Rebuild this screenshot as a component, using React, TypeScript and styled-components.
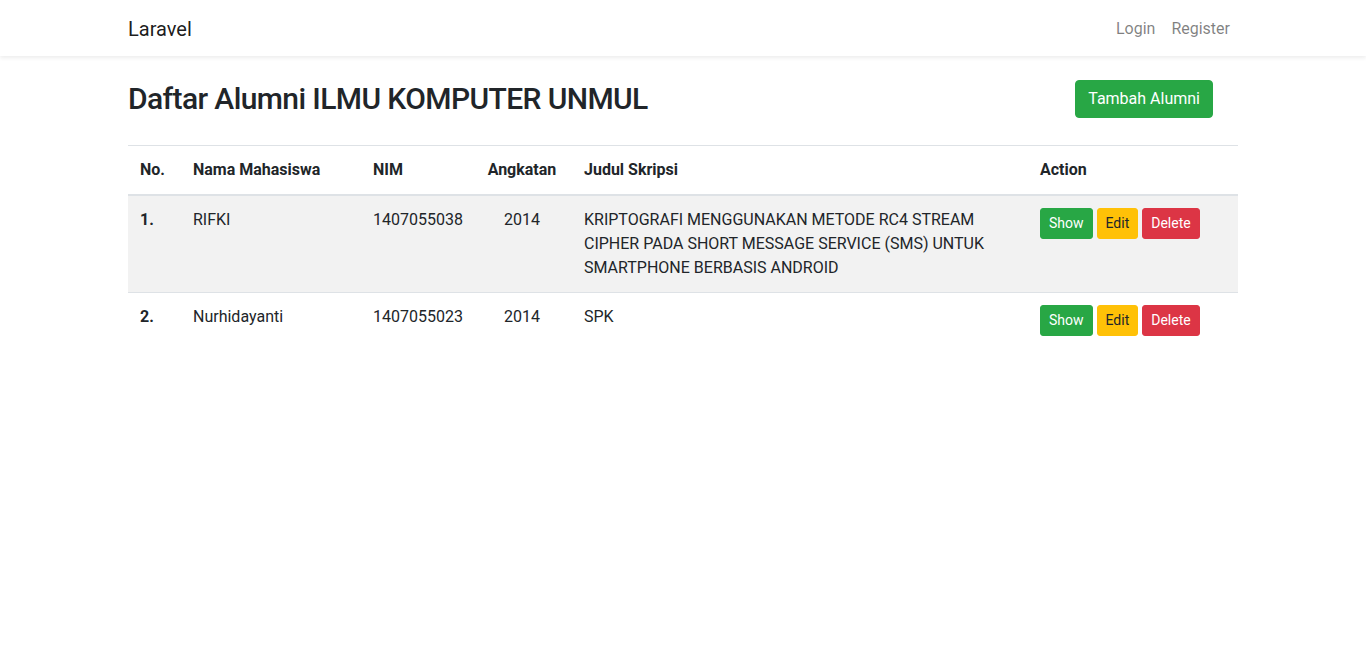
import React from "react";
import styled, { createGlobalStyle } from "styled-components";

const Global = createGlobalStyle`
  * { box-sizing: border-box; }
  body {
    margin: 0;
    font-family: Roboto, "Liberation Sans", sans-serif;
    font-size: 16px;
    line-height: 1.5;
    color: #212529;
    background: #fff;
  }
`;

const Navbar = styled.nav`
  background: #fff;
  box-shadow: 0 2px 4px rgba(0, 0, 0, 0.075);
  padding: 9px 0 7px;
`;

const Container = styled.div`
  width: 1140px;
  margin: 0 auto;
  padding: 0 15px;
`;

const NavInner = styled(Container)`
  display: flex;
  align-items: center;
  justify-content: space-between;
`;

const Brand = styled.a`
  font-size: 20px;
  line-height: 30px;
  padding: 5px 0;
  color: rgba(0, 0, 0, 0.9);
  text-decoration: none;
`;

const NavLinks = styled.div`
  display: flex;
`;

const NavLink = styled.a`
  padding: 8px;
  color: rgba(0, 0, 0, 0.5);
  text-decoration: none;
`;

const Main = styled.main`
  padding-top: 24px;
`;

const HeaderRow = styled.div`
  display: flex;
  align-items: center;
  justify-content: space-between;
  margin-bottom: 27px;
`;

const Title = styled.h2`
  margin: 0;
  font-size: 30px;
  letter-spacing: -0.6px;
  font-weight: 500;
  line-height: 38px;
`;

type Variant = "success" | "warning" | "danger";

const bg: Record<Variant, string> = {
  success: "#28a745",
  warning: "#ffc107",
  danger: "#dc3545",
};

const Button = styled.a<{ $variant: Variant; $small?: boolean }>`
  display: inline-block;
  text-decoration: none;
  border-radius: ${(p) => (p.$small ? "3px" : "4px")};
  border: 1px solid ${(p) => bg[p.$variant]};
  font-size: ${(p) => (p.$small ? "14px" : "16px")};
  line-height: ${(p) => (p.$small ? "21px" : "24px")};
  padding: ${(p) => (p.$small ? "4px 8px" : "6px 12px")};
  background: ${(p) => bg[p.$variant]};
  color: ${(p) => (p.$variant === "warning" ? "#212529" : "#fff")};
`;

const AddButton = styled(Button)`
  margin-right: 25px;
`;

const Table = styled.table`
  width: 100%;
  border-collapse: collapse;
  table-layout: fixed;
`;

const Col = styled.col<{ $w: number }>`
  width: ${(p) => p.$w}px;
`;

const Th = styled.th<{ $center?: boolean }>`
  text-align: ${(p) => (p.$center ? "center" : "left")};
  padding: 12px;
  border-top: 1px solid #dee2e6;
  border-bottom: 2px solid #dee2e6;
  vertical-align: bottom;
  font-weight: 700;
`;

const Tr = styled.tr<{ $striped?: boolean }>`
  background: ${(p) => (p.$striped ? "rgba(0,0,0,0.05)" : "transparent")};
`;

const Td = styled.td<{ $center?: boolean; $bold?: boolean }>`
  padding: 12px;
  border-top: 1px solid #dee2e6;
  vertical-align: top;
  text-align: ${(p) => (p.$center ? "center" : "left")};
  font-weight: ${(p) => (p.$bold ? 700 : 400)};
`;

const Actions = styled.div`
  display: flex;
  gap: 4px;
`;

const rows = [
  {
    no: "1.",
    nama: "RIFKI",
    nim: "1407055038",
    angkatan: "2014",
    judul:
      "KRIPTOGRAFI MENGGUNAKAN METODE RC4 STREAM CIPHER PADA SHORT MESSAGE SERVICE (SMS) UNTUK SMARTPHONE BERBASIS ANDROID",
  },
  { no: "2.", nama: "Nurhidayanti", nim: "1407055023", angkatan: "2014", judul: "SPK" },
];

export default function App() {
  return (
    <>
      <Global />
      <Navbar>
        <NavInner>
          <Brand href="#">Laravel</Brand>
          <NavLinks>
            <NavLink href="#">Login</NavLink>
            <NavLink href="#">Register</NavLink>
          </NavLinks>
        </NavInner>
      </Navbar>
      <Main>
        <Container>
          <HeaderRow>
            <Title>Daftar Alumni ILMU KOMPUTER UNMUL</Title>
            <AddButton href="#" $variant="success">
              Tambah Alumni
            </AddButton>
          </HeaderRow>
          <Table>
            <colgroup>
              <Col $w={53} />
              <Col $w={180} />
              <Col $w={111} />
              <Col $w={100} />
              <Col $w={456} />
              <Col $w={210} />
            </colgroup>
            <thead>
              <tr>
                <Th>No.</Th>
                <Th>Nama Mahasiswa</Th>
                <Th>NIM</Th>
                <Th $center>Angkatan</Th>
                <Th>Judul Skripsi</Th>
                <Th>Action</Th>
              </tr>
            </thead>
            <tbody>
              {rows.map((r, i) => (
                <Tr key={r.no} $striped={i % 2 === 0}>
                  <Td $bold>{r.no}</Td>
                  <Td>{r.nama}</Td>
                  <Td>{r.nim}</Td>
                  <Td $center>{r.angkatan}</Td>
                  <Td>{r.judul}</Td>
                  <Td>
                    <Actions>
                      <Button href="#" $small $variant="success">
                        Show
                      </Button>
                      <Button href="#" $small $variant="warning">
                        Edit
                      </Button>
                      <Button href="#" $small $variant="danger">
                        Delete
                      </Button>
                    </Actions>
                  </Td>
                </Tr>
              ))}
            </tbody>
          </Table>
        </Container>
      </Main>
    </>
  );
}
